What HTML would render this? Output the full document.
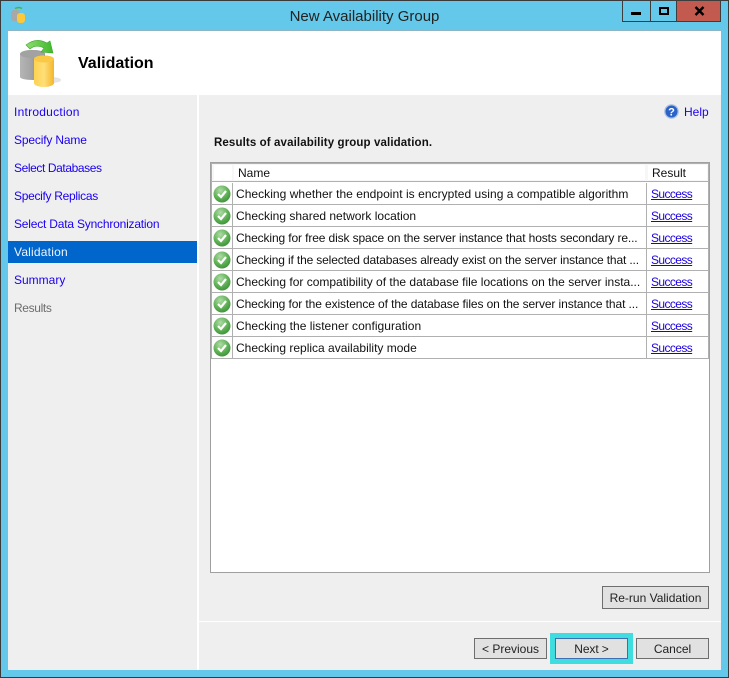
<!DOCTYPE html>
<html><head><meta charset="utf-8">
<style>
html,body{margin:0;padding:0}
body{width:729px;height:678px;overflow:hidden;position:relative;background:#63c8e9;font-family:"Liberation Sans",sans-serif;font-size:12px;color:#111}
div,a,span{position:absolute;white-space:nowrap}
.nav{left:14px;color:#1a00f0;line-height:16px}
.row{left:212px;width:496px;height:21px;border-bottom:1px solid #b0b0b0;background:#fff}
.vl{left:20px;top:0;width:1px;height:22px;background:#b0b0b0}
.vr{left:434px;top:0;width:1px;height:22px;background:#b0b0b0}
.t{left:24px;top:3px;line-height:16px}
.s{left:439px;top:3px;line-height:16px;color:#1a00e0;text-decoration:underline;letter-spacing:-.6px}
.btn{background:#e1e1e1;border:1px solid #6e6e6e;text-align:center;box-sizing:border-box;color:#222}
svg{position:absolute;display:block}
</style></head><body>
<div style="left:0;top:0;width:729px;height:678px;box-sizing:border-box;border:1px solid #3a3a3a"></div>
<svg style="left:10px;top:6px" width="18" height="18" viewBox="0 0 18 18"><path d="M5 2.5Q9 .5 12 2.5" stroke="#4cb83a" stroke-width="1.5" fill="none"/><rect x="1" y="4" width="9" height="11" rx="3" fill="#a8a8a8"/><rect x="7" y="7" width="8" height="10" rx="3" fill="#fbc93a"/></svg>
<div style="left:0;width:729px;top:8px;text-align:center;font-size:15px;line-height:17px;color:#222">New Availability Group</div>
<div style="left:622px;top:0;width:99px;height:22px;box-sizing:border-box;border:1px solid #3d3d3d;background:#63c8e9"></div>
<div style="left:650px;top:0;width:1px;height:22px;background:#3d3d3d"></div>
<div style="left:676px;top:0;width:45px;height:22px;box-sizing:border-box;border:1px solid #3d3d3d;background:#c35a50"></div>
<div style="left:631px;top:12px;width:10px;height:3px;background:#000"></div>
<div style="left:659px;top:7px;width:10px;height:8px;box-sizing:border-box;border:2px solid #000"></div>
<svg style="left:694px;top:6px" width="11" height="10" viewBox="0 0 11 10"><path d="M1.500 1L9.500 9M9.500 1L1.500 9" stroke="#000" stroke-width="2.400"/></svg>

<div style="left:8px;top:31px;width:713px;height:639px;background:#efefef"></div>
<div style="left:8px;top:30px;width:713px;height:1px;background:#8fb4c4"></div>
<div style="left:8px;top:31px;width:713px;height:64px;background:#fff"></div>
<div style="left:197px;top:95px;width:2px;height:575px;background:#fff"></div>

<svg style="left:18px;top:39px" width="44" height="50" viewBox="0 0 44 50">
<defs>
<linearGradient id="g" x1="0" x2="1"><stop offset="0" stop-color="#b5b5b5"/><stop offset=".45" stop-color="#a4a4a4"/><stop offset="1" stop-color="#777"/></linearGradient>
<linearGradient id="y" x1="0" x2="1"><stop offset="0" stop-color="#fdd24f"/><stop offset=".5" stop-color="#ffdf7a"/><stop offset="1" stop-color="#f5b52a"/></linearGradient>
<linearGradient id="a" x1="0" x2="1"><stop offset="0" stop-color="#8fdc6f"/><stop offset="1" stop-color="#3fb82c"/></linearGradient>
</defs>
<ellipse cx="34" cy="41" rx="9" ry="3" fill="#e4e4e4"/>
<path d="M2 15a12.500 4 0 0 1 25 0V38a12.500 3 0 0 1-25 0Z" fill="url(#g)"/>
<ellipse cx="14.500" cy="15" rx="12.500" ry="4" fill="#a2a2a2"/>
<path d="M16 20a10 3.500 0 0 1 20 0V44a10 4 0 0 1-20 0Z" fill="url(#y)"/>
<ellipse cx="26" cy="20" rx="10" ry="3.500" fill="#f9c845"/>
<path d="M8 6Q18-2 29 4L32 2L35 14L23 13L26 9Q18 5 12 10Z" fill="url(#a)" stroke="#3aa62a" stroke-width=".6"/>
</svg>
<div style="left:78px;top:55px;font-size:16px;line-height:18px;font-weight:bold;color:#000">Validation</div>

<div class="nav" style="top:104px;letter-spacing:.25px">Introduction</div>
<div class="nav" style="top:132px;letter-spacing:-.16px">Specify Name</div>
<div class="nav" style="top:160px;letter-spacing:-.4px">Select Databases</div>
<div class="nav" style="top:188px;letter-spacing:-.3px">Specify Replicas</div>
<div class="nav" style="top:216px;letter-spacing:-.2px">Select Data Synchronization</div>
<div style="left:8px;top:241px;width:189px;height:22px;background:#0066cc"></div>
<div class="nav" style="top:244px;color:#eef4ff;letter-spacing:.2px">Validation</div>
<div class="nav" style="top:272px">Summary</div>
<div class="nav" style="top:300px;color:#6d6d6d;letter-spacing:-.36px">Results</div>

<svg style="left:664px;top:104px" width="15" height="15" viewBox="0 0 15 15"><circle cx="7.500" cy="7.500" r="7.300" fill="#a9bedd"/><circle cx="7.500" cy="7.500" r="6" fill="#2a62c8"/><text x="7.500" y="11.500" font-size="11" font-weight="bold" font-family="Liberation Sans" text-anchor="middle" fill="#fff">?</text></svg>
<div style="left:684px;top:104px;line-height:16px;color:#1a00f0">Help</div>

<div style="left:214px;top:136px;line-height:15px;font-size:11.500px;font-weight:bold;color:#111;letter-spacing:.01em">Results of availability group validation.</div>

<div style="left:210px;top:162px;width:500px;height:411px;box-sizing:border-box;border:1px solid #a0a0a0;background:#fff"></div>
<div style="left:211px;top:163px;width:498px;height:1px;background:#b0b0b0"></div>
<div style="left:211px;top:164px;width:1px;height:195px;background:#b0b0b0"></div>
<div style="left:708px;top:164px;width:1px;height:195px;background:#b0b0b0"></div>
<div class="row" style="top:164px;height:17px;background:#f7f7f7">
 <div style="left:2px;top:1px;width:18px;height:15px;background:#fff"></div>
 <div style="left:22px;top:1px;width:411px;height:15px;background:#fff"></div>
 <div style="left:436px;top:1px;width:59px;height:15px;background:#fff"></div>
 <div style="left:26px;top:2px;line-height:15px">Name</div>
 <div style="left:440px;top:2px;line-height:15px">Result</div>
</div>

<div class="row" style="top:183px"><div class="vl"></div><div class="vr"></div>
<svg style="left:1px;top:2px" width="18" height="18" viewBox="0 0 18 18"><defs><radialGradient id="c" cx=".4" cy=".3" r=".8"><stop offset="0" stop-color="#b0dca8"/><stop offset=".6" stop-color="#5aad50"/><stop offset="1" stop-color="#3a8a36"/></radialGradient></defs><circle cx="9" cy="9" r="8.500" fill="url(#c)"/><path d="M5 9L8 12L13 6" stroke="#fff" stroke-width="2.200" fill="none"/></svg>
<span class="t" style="letter-spacing:.04px">Checking whether the endpoint is encrypted using a compatible algorithm</span><a class="s">Success</a></div>

<div class="row" style="top:205px"><div class="vl"></div><div class="vr"></div>
<svg style="left:1px;top:2px" width="18" height="18" viewBox="0 0 18 18"><circle cx="9" cy="9" r="8.500" fill="url(#c)"/><path d="M5 9L8 12L13 6" stroke="#fff" stroke-width="2.200" fill="none"/></svg>
<span class="t">Checking shared network location</span><a class="s">Success</a></div>

<div class="row" style="top:227px"><div class="vl"></div><div class="vr"></div>
<svg style="left:1px;top:2px" width="18" height="18" viewBox="0 0 18 18"><circle cx="9" cy="9" r="8.500" fill="url(#c)"/><path d="M5 9L8 12L13 6" stroke="#fff" stroke-width="2.200" fill="none"/></svg>
<span class="t" style="letter-spacing:-.12px">Checking for free disk space on the server instance that hosts secondary re...</span><a class="s">Success</a></div>

<div class="row" style="top:249px"><div class="vl"></div><div class="vr"></div>
<svg style="left:1px;top:2px" width="18" height="18" viewBox="0 0 18 18"><circle cx="9" cy="9" r="8.500" fill="url(#c)"/><path d="M5 9L8 12L13 6" stroke="#fff" stroke-width="2.200" fill="none"/></svg>
<span class="t" style="letter-spacing:-.15px">Checking if the selected databases already exist on the server instance that ...</span><a class="s">Success</a></div>

<div class="row" style="top:271px"><div class="vl"></div><div class="vr"></div>
<svg style="left:1px;top:2px" width="18" height="18" viewBox="0 0 18 18"><circle cx="9" cy="9" r="8.500" fill="url(#c)"/><path d="M5 9L8 12L13 6" stroke="#fff" stroke-width="2.200" fill="none"/></svg>
<span class="t">Checking for compatibility of the database file locations on the server insta...</span><a class="s">Success</a></div>

<div class="row" style="top:293px"><div class="vl"></div><div class="vr"></div>
<svg style="left:1px;top:2px" width="18" height="18" viewBox="0 0 18 18"><circle cx="9" cy="9" r="8.500" fill="url(#c)"/><path d="M5 9L8 12L13 6" stroke="#fff" stroke-width="2.200" fill="none"/></svg>
<span class="t" style="letter-spacing:-.1px">Checking for the existence of the database files on the server instance that ...</span><a class="s">Success</a></div>

<div class="row" style="top:315px"><div class="vl"></div><div class="vr"></div>
<svg style="left:1px;top:2px" width="18" height="18" viewBox="0 0 18 18"><circle cx="9" cy="9" r="8.500" fill="url(#c)"/><path d="M5 9L8 12L13 6" stroke="#fff" stroke-width="2.200" fill="none"/></svg>
<span class="t" style="letter-spacing:.03px">Checking the listener configuration</span><a class="s">Success</a></div>

<div class="row" style="top:337px"><div class="vl"></div><div class="vr"></div>
<svg style="left:1px;top:2px" width="18" height="18" viewBox="0 0 18 18"><circle cx="9" cy="9" r="8.500" fill="url(#c)"/><path d="M5 9L8 12L13 6" stroke="#fff" stroke-width="2.200" fill="none"/></svg>
<span class="t">Checking replica availability mode</span><a class="s">Success</a></div>

<div class="btn" style="left:602px;top:586px;width:107px;height:23px;line-height:22px">Re-run Validation</div>
<div style="left:199px;top:621px;width:522px;height:1px;background:#fff"></div>
<div class="btn" style="left:474px;top:638px;width:73px;height:21px;line-height:20px">&lt; Previous</div>
<div style="left:550px;top:633px;width:83px;height:31px;background:#3fdce0"></div>
<div class="btn" style="left:555px;top:638px;width:73px;height:21px;line-height:20px;border-color:#3f6fb0;letter-spacing:-.1px">Next &gt;</div>
<div class="btn" style="left:636px;top:638px;width:73px;height:21px;line-height:20px">Cancel</div>
</body></html>
